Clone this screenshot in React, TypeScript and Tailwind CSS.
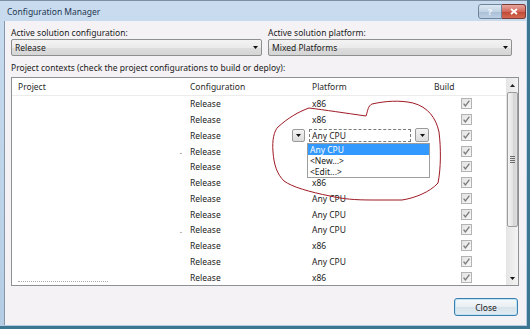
import React from "react";

const rows: { p: string; dot?: boolean; last?: boolean }[] = [
  { p: "x86" },
  { p: "x86" },
  { p: "" },
  { p: "", dot: true },
  { p: "" },
  { p: "x86" },
  { p: "Any CPU" },
  { p: "Any CPU" },
  { p: "Any CPU", dot: true },
  { p: "x86" },
  { p: "Any CPU" },
  { p: "x86", last: true },
];

function Arrow() {
  return (
    <svg width="5" height="3" viewBox="0 0 5 3">
      <path d="M0 0 H5 L2.5 3 Z" fill="#111" />
    </svg>
  );
}

function Check() {
  return (
    <div className="w-[11px] h-[11px] border border-[#b3b3b3] bg-gradient-to-br from-[#e3e3e3] to-[#f7f7f7] flex items-center justify-center">
      <svg width="9" height="9" viewBox="0 0 9 9">
        <path d="M1.6 4.6 L3.4 7 L7.4 1.6" stroke="#7b7b7b" strokeWidth="1.3" fill="none" />
      </svg>
    </div>
  );
}

function Combo({ text, w }: { text: string; w: string }) {
  return (
    <div
      className={`${w} h-[17px] border border-[#8e8f8f] rounded-[2px] bg-[linear-gradient(#f3f3f3_0%,#ebebeb_50%,#dddddd_51%,#d5d5d5_100%)] flex items-center justify-between pl-[3px] pr-[3px]`}
    >
      <span className="text-[#1a1a1a]">{text}</span>
      <Arrow />
    </div>
  );
}

export default function App() {
  return (
    <div className="relative w-[530px] h-[329px] overflow-hidden bg-[linear-gradient(#c9dcef,#b5cde4)] border-r-[3px] border-b-[3px] border-[#3c7690] font-['Noto_Sans',sans-serif] text-[8.5px] leading-[11px] text-[#1a1a1a]">
      {/* title bar */}
      <div className="h-[21px] flex items-center justify-between pl-[7px] pr-[1px] border-t border-[#7d8fa3]">
        <span className="text-[#1d3550]">Configuration Manager</span>
        <div className="flex h-[15px]">
          <div className="w-[24px] h-[15px] rounded-l-[3px] border border-[#6f859c] bg-[linear-gradient(#dde8f3,#c2d3e4_50%,#a9bfd6_51%,#bcd0e4)] flex items-center justify-center text-[9px] font-bold text-[#f4f8fc] leading-none">
            ?
          </div>
          <div className="w-[24px] h-[15px] rounded-r-[3px] border border-l-0 border-[#7a3b35] bg-[linear-gradient(#e5a79e,#d2695c_50%,#c04634_51%,#d26a52)] flex items-center justify-center">
            <svg width="8" height="7" viewBox="0 0 8 7">
              <path d="M1 1 L7 6 M7 1 L1 6" stroke="#fff" strokeWidth="1.8" />
            </svg>
          </div>
        </div>
      </div>

      {/* body */}
      <div className="ml-[4px] mr-[1px] h-[304px] border-l border-[#8497ab] bg-[#f4f2f5] pl-[6px] pt-[6px]">
        <div className="flex gap-[6px]">
          <div className="flex flex-col">
            <span className="h-[11px]">Active solution configuration:</span>
            <div className="mt-[1px]">
              <Combo text="Release" w="w-[251px]" />
            </div>
          </div>
          <div className="flex flex-col">
            <span className="h-[11px]">Active solution platform:</span>
            <div className="mt-[1px]">
              <Combo text="Mixed Platforms" w="w-[244px]" />
            </div>
          </div>
        </div>

        <div className="mt-[6px] h-[11px]">Project contexts (check the project configurations to build or deploy):</div>

        {/* table */}
        <div className="mt-[4px] w-[508px] h-[209px] border border-[#8d9095] bg-white flex">
          <div className="flex-1 flex flex-col">
            <div className="h-[18px] flex items-center border-b border-[#ececec] text-[#2a2a2a]">
              <div className="w-[174px] pl-[6px]">Project</div>
              <div className="w-[122px] pl-[4px]">Configuration</div>
              <div className="w-[121px] pl-[4px]">Platform</div>
              <div className="pl-[5px]">Build</div>
            </div>
            {rows.map((r, i) => (
              <div key={i} className="h-[15.75px] flex items-center">
                <div className="w-[174px] pl-[6px] flex items-center justify-end pr-[4px] h-full relative">
                  {r.dot && <span className="text-[#555] leading-none">.</span>}
                  {r.last && (
                    <span className="absolute left-[6px] bottom-[3px] w-[90px] border-t border-dotted border-[#a9a9a9]" />
                  )}
                </div>
                <div className="w-[122px] pl-[4px]">Release</div>
                <div className="w-[121px] pl-[4px]">{r.p}</div>
                <div className="pl-[32px]">
                  <Check />
                </div>
              </div>
            ))}
          </div>
          {/* scrollbar */}
          <div className="w-[12px] h-full bg-[linear-gradient(90deg,#e6e6e6,#f3f3f3)] border-l border-[#e4e4e4] flex flex-col items-center">
            <div className="h-[14px] w-full flex items-center justify-center">
              <svg width="5" height="3" viewBox="0 0 5 3">
                <path d="M0 3 L2.5 0 L5 3 Z" fill="#222" />
              </svg>
            </div>
            <div className="h-[135px] w-[11px] rounded-[2px] border border-[#9c9c9c] bg-[linear-gradient(90deg,#f4f4f4,#e4e4e4_50%,#d3d3d3_51%,#dedede)] flex flex-col items-center justify-center gap-[1px]">
              <span className="w-[5px] h-[1px] bg-[#6b6b6b]" />
              <span className="w-[5px] h-[1px] bg-[#6b6b6b]" />
              <span className="w-[5px] h-[1px] bg-[#6b6b6b]" />
              <span className="w-[5px] h-[1px] bg-[#6b6b6b]" />
            </div>
            <div className="flex-1" />
            <div className="h-[14px] w-full flex items-center justify-center">
              <Arrow />
            </div>
          </div>
        </div>

        <div className="flex justify-end pr-[8px] mt-[12px]">
          <button className="w-[64px] h-[18px] rounded-[3px] border border-[#3b7fae] bg-[linear-gradient(#f5f9fb,#e8eef2_50%,#d6e2ea_51%,#e3ecf1)] shadow-[inset_0_0_0_1px_#bfe3f4] text-[#1a1a1a]">
            Close
          </button>
        </div>
      </div>

      {/* in-place platform editor (row 3) */}
      <div className="absolute left-[292px] top-[129px] w-[13px] h-[13px] border border-[#9a9a9a] rounded-[2px] bg-[linear-gradient(#f4f4f4,#dcdcdc)] flex items-center justify-center">
        <Arrow />
      </div>
      <div className="absolute left-[309px] top-[129px] w-[102px] h-[13px] border border-dashed border-[#7a7a7a] bg-white pl-[2px] flex items-center">
        Any CPU
      </div>
      <div className="absolute left-[415px] top-[128px] w-[14px] h-[14px] border border-[#9a9a9a] rounded-[2px] bg-[linear-gradient(#f4f4f4,#dcdcdc)] flex items-center justify-center">
        <Arrow />
      </div>

      {/* dropdown list */}
      <div className="absolute left-[307px] top-[143px] w-[123px] h-[35px] border border-[#9d9d9d] bg-white flex flex-col">
        <div className="h-[11px] bg-[#3399ff] text-white pl-[2px] flex items-center">Any CPU</div>
        <div className="h-[11px] pl-[2px] flex items-center">&lt;New...&gt;</div>
        <div className="h-[11px] pl-[2px] flex items-center">&lt;Edit...&gt;</div>
      </div>

      {/* hand-drawn red annotation */}
      <svg className="absolute left-0 top-0 pointer-events-none" width="530" height="329" viewBox="0 0 530 329">
        <path
          d="M366 116 C368 110 368 106 372 104 C385 101 400 100 413 103 C428 107 436 118 439 132 C441 148 441 168 438 183 C430 192 415 198 402 200 L372 200 C355 200 343 199 330 196 C310 192 292 187 284 181 C277 174 274 165 273 152 C272 140 274 131 278 127 C288 118 298 112 309 108 C325 110 345 113 366 116"
          stroke="#9e1a24"
          strokeWidth="1"
          fill="none"
        />
      </svg>
    </div>
  );
}
